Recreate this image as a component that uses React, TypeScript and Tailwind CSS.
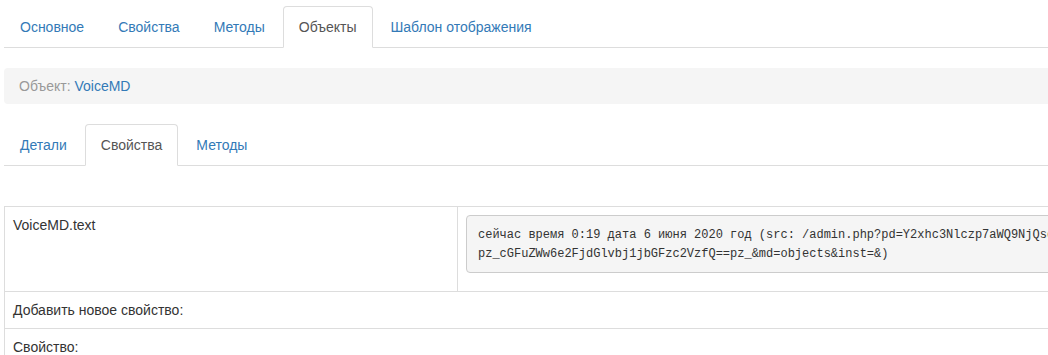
const tabsTop = ['Основное', 'Свойства', 'Методы', 'Объекты', 'Шаблон отображения'];
const tabsInner = ['Детали', 'Свойства', 'Методы'];

function Tabs({ items, active }: { items: string[]; active: string }) {
  return (
    <ul className="flex border-b border-[#ddd]">
      {items.map((t) => (
        <li key={t} className="mr-[2px] -mb-px">
          {t === active ? (
            <span className="block px-[15px] py-[10px] leading-[20px] text-[#555] bg-white border border-[#ddd] border-b-transparent rounded-t-[4px]">
              {t}
            </span>
          ) : (
            <a className="block px-[15px] py-[10px] leading-[20px] text-[#337ab7] border border-transparent rounded-t-[4px] cursor-pointer">
              {t}
            </a>
          )}
        </li>
      ))}
    </ul>
  );
}

export default function App() {
  return (
    <div
      className="w-[1048px] h-[355px] overflow-hidden bg-white text-[14px] text-[#333]"
      style={{ fontFamily: '"Liberation Sans", Arial, sans-serif' }}
    >
      <div className="w-[1400px] pl-[4px] pt-[6px]">
        <Tabs items={tabsTop} active="Объекты" />

        {/* Breadcrumb */}
        <div className="mt-[20px] bg-[#f5f5f5] rounded-[4px] px-[15px] py-[8px] leading-[20px]">
          <span className="text-[#999]">Объект: </span>
          <a className="text-[#337ab7]">VoiceMD</a>
        </div>

        <div className="mt-[20px]">
          <Tabs items={tabsInner} active="Свойства" />
        </div>

        {/* Properties table */}
        <table className="mt-[40px] w-full border-collapse border border-[#ddd] leading-[20px]">
          <tbody>
            <tr>
              <td className="w-[453px] align-top p-[8px] border border-[#ddd]">VoiceMD.text</td>
              <td className="align-top p-[8px] border border-[#ddd]">
                <pre
                  className="mb-[10px] bg-[#f5f5f5] border border-[#ccc] rounded-[4px] px-[11px] pt-[10px] pb-[8px] text-[12px] leading-[19px] text-[#333] whitespace-nowrap overflow-hidden"
                  style={{ fontFamily: '"Liberation Mono", "DejaVu Sans Mono", monospace' }}
                >
                  <span className="block">
                    сейчас время 0:19 дата 6 июня 2020 год (src: /admin.php?pd=Y2xhc3Nlczp7aWQ9NjQsd
                  </span>
                  <span className="block">pz_cGFuZWw6e2FjdGlvbj1jbGFzc2VzfQ==pz_&amp;md=objects&amp;inst=&amp;)</span>
                </pre>
              </td>
            </tr>
            <tr>
              <td colSpan={2} className="p-[8px] border border-[#ddd]">
                Добавить новое свойство:
              </td>
            </tr>
            <tr>
              <td colSpan={2} className="p-[8px] h-[60px] align-top border border-[#ddd]">
                Свойство:
              </td>
            </tr>
          </tbody>
        </table>
      </div>
    </div>
  );
}
